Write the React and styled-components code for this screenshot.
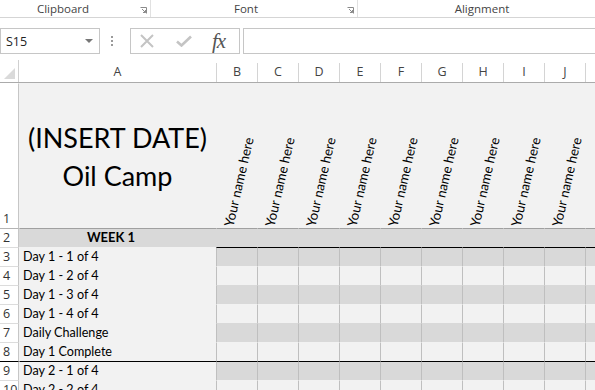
import styled, { createGlobalStyle } from "styled-components";

const GlobalStyle = createGlobalStyle`
  body {
    margin: 0;
    background: #fff;
    font-family: "Open Sans", "Noto Sans", sans-serif;
    overflow: hidden;
  }
`;

const Page = styled.div`
  width: 595px;
  height: 390px;
  overflow: hidden;
  background: #fff;
`;

const Ribbon = styled.div`
  display: flex;
  height: 18px;
  box-sizing: border-box;
  border-bottom: 1px solid #d5d5d5;
`;

const Group = styled.div`
  display: flex;
  align-items: center;
  flex: none;
  width: ${(p) => p.$w}px;
  box-sizing: border-box;
  border-right: ${(p) => (p.$last ? "none" : "1px solid #e1e1e1")};
`;

const GroupLabel = styled.div`
  width: ${(p) => p.$w}px;
  text-align: center;
  font-size: 11.5px;
  color: #444;
  line-height: 16px;
`;

const Launcher = styled.svg`
  margin-left: ${(p) => p.$gap}px;
  margin-right: 3px;
  margin-top: 4px;
`;

const FormulaBar = styled.div`
  display: flex;
  margin-top: 10px;
  height: 26px;
`;

const NameBox = styled.div`
  flex: none;
  width: 100px;
  box-sizing: border-box;
  border: 1px solid #c6c6c6;
  display: flex;
  align-items: center;
  justify-content: space-between;
  padding: 0 6px 0 5px;
  font-size: 12.5px;
  color: #222;
`;

const DropArrow = styled.span`
  width: 0;
  height: 0;
  border-left: 4px solid transparent;
  border-right: 4px solid transparent;
  border-top: 4px solid #777;
`;

const Grip = styled.div`
  flex: none;
  width: 30px;
  display: flex;
  flex-direction: column;
  align-items: center;
  justify-content: center;
  gap: 2px;
  margin-left: -3px;
`;

const Dot = styled.span`
  width: 2px;
  height: 2px;
  background: #9a9a9a;
`;

const FxBox = styled.div`
  flex: none;
  width: 110px;
  margin-left: 3px;
  box-sizing: border-box;
  border: 1px solid #c6c6c6;
  display: flex;
  align-items: center;
  padding-left: 9px;
`;

const FxText = styled.span`
  font-family: "Liberation Serif", "DejaVu Serif", serif;
  font-style: italic;
  font-size: 21px;
  color: #555;
  margin-left: 20px;
  letter-spacing: -1px;
  line-height: 22px;
`;

const FormulaInput = styled.div`
  flex: 1;
  margin-left: 3px;
  box-sizing: border-box;
  border: 1px solid #c6c6c6;
  border-right: none;
`;

const HeaderRow = styled.div`
  display: flex;
  align-items: flex-end;
  margin-top: 6px;
  height: 23px;
  box-sizing: border-box;
  border-bottom: 1px solid #ababab;
`;

const Corner = styled.div`
  flex: none;
  width: 19px;
  height: 22px;
  box-sizing: border-box;
  border-right: 1px solid #d0d0d0;
  display: flex;
  align-items: flex-end;
  justify-content: flex-end;
  padding: 0 3px 3px 0;
`;

const CornerMark = styled.span`
  width: 0;
  height: 0;
  border-left: 11px solid transparent;
  border-bottom: 11px solid #dadada;
`;

const ColHead = styled.div`
  flex: none;
  width: ${(p) => p.$w}px;
  height: 19px;
  box-sizing: border-box;
  border-left: ${(p) => (p.$first ? "none" : "1px solid #d4d4d4")};
  text-align: center;
  font-size: 12.5px;
  line-height: 18px;
  color: #444;
`;

const Row = styled.div`
  display: flex;
  height: ${(p) => p.$h}px;
`;

const RowHead = styled.div`
  flex: none;
  width: 19px;
  box-sizing: border-box;
  border-right: 1px solid #c6c6c6;
  border-top: 1px solid ${(p) => p.$top || "#dcdcdc"};
  background: #fff;
  font-size: 12.5px;
  color: #333;
  padding-left: 3px;
  display: flex;
  align-items: flex-end;
  line-height: 18px;
`;

const Cell = styled.div`
  flex: none;
  width: ${(p) => p.$w}px;
  box-sizing: border-box;
  background: ${(p) => p.$bg};
  border-top: 1px solid ${(p) => p.$top || p.$bg};
  border-left: 1px solid ${(p) => p.$line || p.$bg};
  font-family: Lato, "Open Sans", sans-serif;
  font-size: 12.6px;
  color: #000;
  display: flex;
  align-items: flex-end;
  padding: 0 0 1px 3px;
  line-height: 17px;
`;

const TitleCell = styled.div`
  flex: none;
  width: 197px;
  background: #f2f2f2;
  display: flex;
  flex-direction: column;
  align-items: center;
  justify-content: center;
  font-family: Lato, "Open Sans", sans-serif;
  font-size: 27px;
  line-height: 38px;
  color: #000;
  padding-top: 2px;
  box-sizing: border-box;
`;

const NameCell = styled.div`
  flex: none;
  width: ${(p) => p.$w}px;
  background: #f2f2f2;
  display: flex;
  align-items: flex-end;
  justify-content: center;
  padding-bottom: 37px;
  box-sizing: border-box;
`;

const NameLabel = styled.span`
  flex: none;
  white-space: nowrap;
  font-family: Lato, "Open Sans", sans-serif;
  font-size: 13.3px;
  line-height: 18px;
  transform: translateX(2px) rotate(-77deg);
`;

const WeekCell = styled(Cell)`
  justify-content: center;
  font-weight: 700;
  font-size: 13px;
  padding: 0 14px 1px 0;
`;

const cols = ["B", "C", "D", "E", "F", "G", "H", "I", "J", "K"];
const colW = (c) => (c === "K" ? 10 : 41);

const days = [
  { n: 3, label: "Day 1 - 1 of 4", dark: true, rule: "cells" },
  { n: 4, label: "Day 1 - 2 of 4" },
  { n: 5, label: "Day 1 - 3 of 4", dark: true },
  { n: 6, label: "Day 1 - 4 of 4" },
  { n: 7, label: "Daily Challenge", dark: true },
  { n: 8, label: "Day 1 Complete" },
  { n: 9, label: "Day 2 - 1 of 4", dark: true, rule: "full" },
  { n: 10, label: "Day 2 - 2 of 4" },
];

const LauncherIcon = ({ gap }) => (
  <Launcher $gap={gap} width="7" height="7" viewBox="0 0 7 7">
    <path d="M0.5 0.5h6v6" fill="none" stroke="#8a8a8a" strokeWidth="1" />
    <path d="M2 2l3.5 3.5M3 5.5h2.5V3" fill="none" stroke="#8a8a8a" strokeWidth="1" />
  </Launcher>
);

export default function App() {
  return (
    <Page>
      <GlobalStyle />
      <Ribbon>
        <Group $w={151}>
          <GroupLabel $w={126}>Clipboard</GroupLabel>
          <LauncherIcon gap={14} />
        </Group>
        <Group $w={207}>
          <GroupLabel $w={190}>Font</GroupLabel>
          <LauncherIcon gap={6} />
        </Group>
        <Group $w={248} $last>
          <GroupLabel $w={248}>Alignment</GroupLabel>
        </Group>
      </Ribbon>

      <FormulaBar>
        <NameBox>
          S15
          <DropArrow />
        </NameBox>
        <Grip>
          <Dot />
          <Dot />
          <Dot />
        </Grip>
        <FxBox>
          <svg width="14" height="14" viewBox="0 0 14 14">
            <path d="M1 1L13 13M13 1L1 13" stroke="#c4c4c4" strokeWidth="2" />
          </svg>
          <svg width="16" height="12" viewBox="0 0 16 12" style={{ marginLeft: 22 }}>
            <path d="M1 6.5L5.5 10.5L15 1.5" fill="none" stroke="#c4c4c4" strokeWidth="2.6" />
          </svg>
          <FxText>fx</FxText>
        </FxBox>
        <FormulaInput />
      </FormulaBar>

      <HeaderRow>
        <Corner>
          <CornerMark />
        </Corner>
        <ColHead $w={197} $first>
          A
        </ColHead>
        {cols.map((c) => (
          <ColHead key={c} $w={colW(c)}>
            {c === "K" ? "" : c}
          </ColHead>
        ))}
      </HeaderRow>

      <Row $h={145}>
        <RowHead $top="#fff">1</RowHead>
        <TitleCell>
          <div>(INSERT DATE)</div>
          <div>Oil Camp</div>
        </TitleCell>
        {cols.map((c) => (
          <NameCell key={c} $w={colW(c)}>
            {c !== "K" && <NameLabel>Your name here</NameLabel>}
          </NameCell>
        ))}
      </Row>

      <Row $h={19}>
        <RowHead $top="#b4b4b4">2</RowHead>
        <WeekCell $w={197} $bg="#d9d9d9" $top="#a0a0a0">
          WEEK 1
        </WeekCell>
        {cols.map((c) => (
          <Cell key={c} $w={colW(c)} $bg="#d9d9d9" $top="#a0a0a0" />
        ))}
      </Row>

      {days.map((d) => {
        const bg = d.dark ? "#d9d9d9" : "#f2f2f2";
        const full = d.rule === "full";
        return (
          <Row key={d.n} $h={19}>
            <RowHead $top={full ? "#000" : undefined}>{d.n}</RowHead>
            <Cell $w={197} $bg="#f2f2f2" $top={full ? "#000" : undefined}>
              {d.label}
            </Cell>
            {cols.map((c) => (
              <Cell
                key={c}
                $w={colW(c)}
                $bg={bg}
                $line="#bfbfbf"
                $top={d.rule ? "#000" : undefined}
              />
            ))}
          </Row>
        );
      })}
    </Page>
  );
}
